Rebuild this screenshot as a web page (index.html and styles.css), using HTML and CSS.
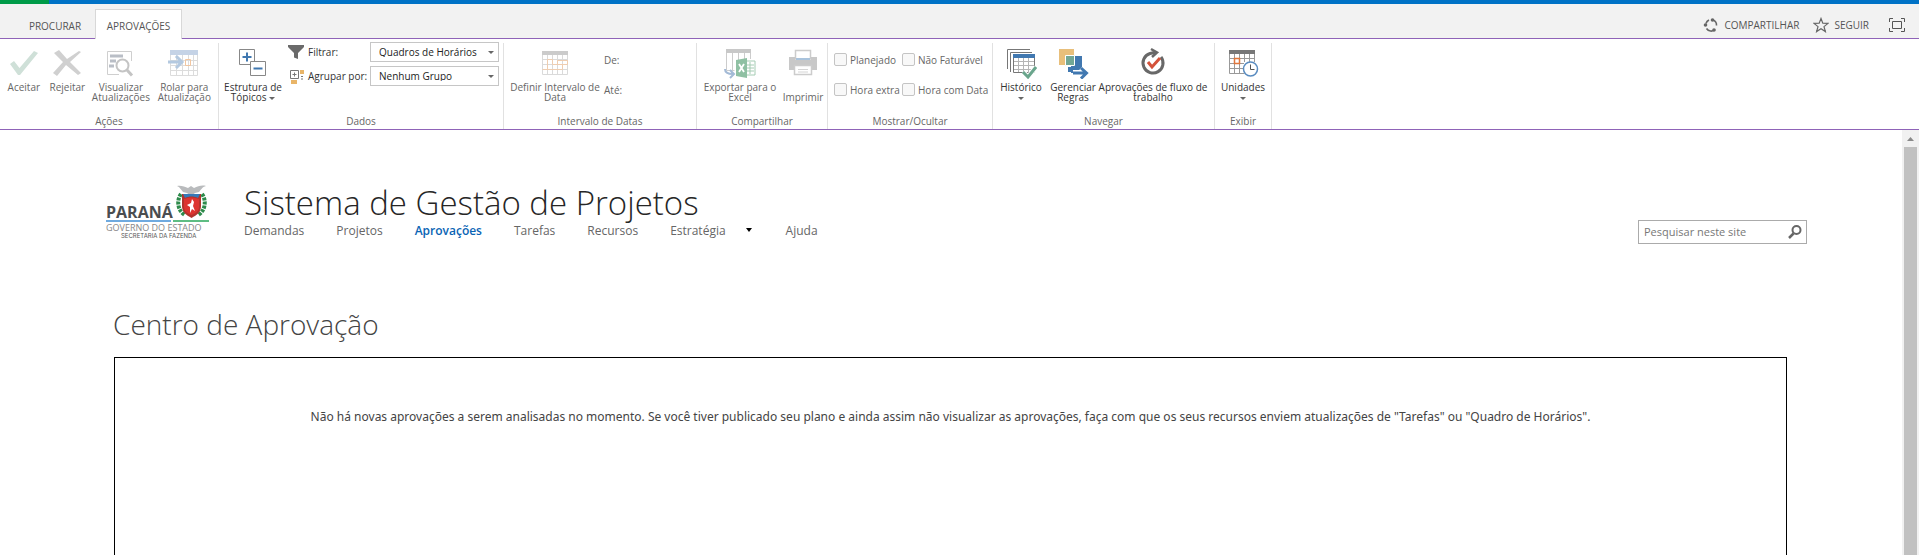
FILE: index.html
```html
<!DOCTYPE html>
<html lang="pt-BR">
<head>
<meta charset="utf-8">
<title>Centro de Aprovação</title>
<link rel="stylesheet" href="styles.css">
</head>
<body>
<div class="suite-bar"></div>
<header class="tab-row">
  <nav class="tabs">
    <button class="tab">PROCURAR</button>
    <button class="tab tab-active">APROVAÇÕES</button>
  </nav>
  <div class="page-actions">
    <button class="page-action">
      <svg width="16" height="16" viewBox="0 0 16 16" fill="none" stroke="#666" stroke-width="1.6"><path d="M3 6.500A5.500 5.500 0 0 1 6 3M10 3a5.500 5.500 0 0 1 3.500 5.500M12 12.500a5.500 5.500 0 0 1-8.500-1"/><g fill="#666" stroke="none"><circle cx="9.500" cy="3" r="1.800"/><circle cx="2.500" cy="8" r="1.800"/><circle cx="11" cy="13" r="1.800"/></g></svg>
      COMPARTILHAR</button>
    <button class="page-action">
      <svg width="16" height="16" viewBox="0 0 16 16" fill="none" stroke="#666" stroke-width="1.200"><path d="M8 1.500 9.800 6.200 15 6.400 11 9.600 12.400 14.600 8 11.800 3.600 14.600 5 9.600 1 6.400 6.200 6.200Z"/></svg>
      SEGUIR</button>
    <button class="page-action page-focus" aria-label="Foco no conteúdo">
      <svg width="16" height="14" viewBox="0 0 16 14" fill="none" stroke="#555"><path d="M.5 4V.5H4M12 .5h3.500V4M15.500 10v3.500H12M4 13.500H.5V10M3.500 3.500h9v7h-9z"/></svg>
    </button>
  </div>
</header>

<section class="ribbon" aria-label="Faixa de opções">
  <div class="group group-actions">
    <div class="group-body">
      <button class="tool tool-s disabled">
        <svg class="icon" viewBox="0 0 32 32"><path d="M2 17l4-3 5.500 7L26 4l4 2-18 22h-2z" fill="#cfe0d8"/></svg>
        <span>Aceitar</span></button>
      <button class="tool tool-s disabled">
        <svg class="icon" viewBox="0 0 32 32"><path d="M3 6l5-3 8 9L28 4l2 1-11 10 11 11-3 2-12-10L6 29l-4-3 10-11z" fill="#d0d0d0"/></svg>
        <span>Rejeitar</span></button>
      <button class="tool tool-m disabled">
        <svg class="icon" viewBox="0 0 32 32" fill="none" stroke="#cfcfcf"><path d="M14 27.500H2.500v-23h24V14"/><path d="M5 9h13M5 14h6M4 19h5" stroke="#b9bec6" stroke-width="3"/><circle cx="17.500" cy="18.500" r="6" stroke="#c4c4c4" stroke-width="2" fill="#fff"/><path d="M22 23l5 5.500" stroke="#c4c4c4" stroke-width="3"/></svg>
        <span>Visualizar<br>Atualizações</span></button>
      <button class="tool tool-m disabled">
        <svg class="icon" viewBox="0 0 32 32" fill="none"><path d="M2 3h28v5H2z" fill="#c5d3e6"/><path d="M2.500 8v20.500h27V8M8.500 8v20M14.500 8v20M20.500 8v20M25.500 8v20M2 13.500h27M2 18.500h27M2 23.500h27" stroke="#dcdcdc"/><path d="M0 15h12M8 9l6 6-6 6" stroke="#b4c9e0" stroke-width="3"/><path d="M17.500 12.500h5v6h-5z" stroke="#f2c6a0"/></svg>
        <span>Rolar para<br>Atualização</span></button>
    </div>
    <div class="group-name">Ações</div>
  </div>

  <div class="group group-data">
    <div class="group-body">
      <button class="tool tool-m">
        <svg class="icon" viewBox="0 0 32 32" fill="none" stroke="#888"><path d="M2.500 2.500h15v15h-15z"/><path d="M13.500 14.500h15v14h-15z" fill="#fff"/><path d="M5.500 10h9M10 5.500v9M16.500 21.500h9" stroke="#4178b0" stroke-width="2"/></svg>
        <span>Estrutura de<br>Tópicos <i class="caret"></i></span></button>
      <div class="filters">
        <svg width="16" height="15" viewBox="0 0 16 15"><path d="M0 0h16v2l-6 6v6l-4-1.500V8L0 2z" fill="#6a6a6a"/></svg>
        <label for="filter">Filtrar:</label>
        <div class="drop"><select id="filter"><option>Quadros de Horários</option></select><i class="caret"></i></div>
        <svg width="16" height="15" viewBox="0 0 16 15"><path d="M2.500 1.500h8v8h-8zM6.500 3.500v4M4.500 5.500h4" fill="none" stroke="#777"/><path d="M12 1h4v4h-4zM3 11h6v4H3z" fill="#e9b568"/><path d="M13 7h2v1h-2zM13 9.500h2v1h-2z" fill="#777"/></svg>
        <label for="grouping">Agrupar por:</label>
        <div class="drop"><select id="grouping"><option>Nenhum Grupo</option></select><i class="caret"></i></div>
      </div>
    </div>
    <div class="group-name">Dados</div>
  </div>

  <div class="group group-dates">
    <div class="group-body">
      <button class="tool tool-l disabled">
        <svg class="icon" viewBox="0 0 32 32" fill="none"><path d="M3 4h26v4H3z" fill="#cbcbcb"/><path d="M3.500 8v19.500h25V8M8.500 8v19M13.500 8v19M18.500 8v19M23.500 8v19M3 12.500h25M3 17.500h25M3 22.500h25" stroke="#dadada"/><path d="M8.500 12.500h5v5h10v5h-15zM18.500 17.500h10v-4h-10zM3.500 22.500h5" stroke="#efcdb0"/></svg>
        <span>Definir Intervalo de<br>Data</span></button>
      <div class="range disabled"><span>De:</span><span>Até:</span></div>
    </div>
    <div class="group-name">Intervalo de Datas</div>
  </div>

  <div class="group group-share">
    <div class="group-body">
      <button class="tool tool-xl disabled">
        <svg class="icon" viewBox="0 0 32 32" fill="none"><path d="M2 2h25v4H2z" fill="#c8c8c8"/><path d="M2.500 6v17.500h8M8.500 6v17M14.500 6v7M20.500 6v6M26.500 6v6" stroke="#ccc"/><path d="M21 14h10v14H21zM22 18h8M22 21h8M22 24h8M26 15v12" stroke="#a5ccb4" fill="#fff"/><path d="M12 13l11-2v20l-11-2z" fill="#8fc0a3"/><path d="M15 17l5 8M20 17l-5 8" stroke="#fff" stroke-width="1.800"/><path d="M1 22c0 4 3 5 8 5M6 23l4 4-4 4" stroke="#a3bad6" stroke-width="2"/></svg>
        <span>Exportar para o<br>Excel</span></button>
      <button class="tool tool-s disabled">
        <svg class="icon" viewBox="0 0 32 32"><path d="M8.500 3.500h15V12h-15z" fill="#fff" stroke="#ccc" stroke-width="1.500"/><path d="M2 10h6v3h16v-3h6v13h-5v-5H7v5H2z" fill="#c8c8c8"/><path d="M9 11h14v2H9z" fill="#a9c3dc"/><path d="M7.500 18.500h17v9h-17z" fill="#fff" stroke="#ccc" stroke-width="1.500"/><path d="M11 22.500h10M11 25h10" stroke="#d4d4d4"/></svg>
        <span><br>Imprimir</span></button>
    </div>
    <div class="group-name">Compartilhar</div>
  </div>

  <div class="group group-show">
    <div class="checks disabled">
      <label><input type="checkbox">Planejado</label>
      <label><input type="checkbox">Não Faturável</label>
      <label><input type="checkbox">Hora extra</label>
      <label><input type="checkbox">Hora com Data</label>
    </div>
    <div class="group-name">Mostrar/Ocultar</div>
  </div>

  <div class="group group-navigate">
    <div class="group-body">
      <button class="tool tool-n">
        <svg class="icon" viewBox="0 0 32 32" fill="none" stroke="#777"><path d="M2.500 22V2.500H25M5.500 25V5.500H27"/><path d="M8.500 9v16.500h21V9z" fill="#fff"/><path d="M13.500 10v15M18.500 10v15M23.500 10v15M9 14.500h20M9 18.500h20M9 22.500h20" stroke="#b5b5b5"/><path d="M8 7h22v4H8z" fill="#4178b0" stroke="none"/><path d="M18 25l5 5 8-10" stroke="#fff" stroke-width="5"/><path d="M18 25l5 5 8-10" stroke="#6aa58c" stroke-width="3"/></svg>
        <span>Histórico<br><i class="caret"></i></span></button>
      <button class="tool tool-n">
        <svg class="icon" viewBox="0 0 32 32"><path d="M2 2h15v16H2z" fill="#e8bf7b"/><path d="M14 9h11v17H14z" fill="#4178b0"/><path d="M8.500 8.500h9v10h-9z" fill="#72a795" stroke="#fff"/><path d="M11 20h5v5h-5z" fill="#4178b0"/><path d="M16 26h13M24 21l5.500 5-5.500 5.500" fill="none" stroke="#fff" stroke-width="6"/><path d="M16 26h13M24 21l5.500 5-5.500 5.500" fill="none" stroke="#4178b0" stroke-width="3"/></svg>
        <span>Gerenciar<br>Regras</span></button>
      <button class="tool tool-w">
        <svg class="icon" viewBox="0 0 32 32" fill="none" stroke="#686868"><path d="M24 10a10 10 0 1 1-11-3.500c3-1 5-1 7-1" stroke-width="3"/><path d="M14 2l6 3.500-5 4.500" stroke-width="2.500"/><path d="M11 15l4 5 8-9" stroke="#d4523a" stroke-width="3"/></svg>
        <span>Aprovações de fluxo de<br>trabalho</span></button>
    </div>
    <div class="group-name">Navegar</div>
  </div>

  <div class="group group-view">
    <div class="group-body">
      <button class="tool tool-n">
        <svg class="icon" viewBox="0 0 32 32" fill="none"><path d="M2 3h26v4H2z" fill="#777"/><path d="M2.500 7v19.500h15M27.500 7v8M7.500 7v19M12.500 7v19M17.500 7v8M22.500 7v8M2 11.500h25M2 16.500h15M2 21.500h15" stroke="#999"/><path d="M7.500 11.500h5v5h-5z" stroke="#e0763b" stroke-width="1.500"/><circle cx="23.500" cy="22" r="7" fill="#fff" stroke="#5a8cc0" stroke-width="1.500"/><path d="M23.500 17.500V22.500h4" stroke="#555"/></svg>
        <span>Unidades<br><i class="caret"></i></span></button>
    </div>
    <div class="group-name">Exibir</div>
  </div>
</section>

<div class="workspace">
  <main class="content">
    <div class="site-header">
      <a href="#" class="logo" aria-label="Paraná Governo do Estado, Secretaria da Fazenda">
        <svg width="108" height="56" viewBox="0 0 108 56">
          <path d="M72 1c4-1 8 1 11 2l3-2 3 2c4-2 8-3 12-2-4 1-5 4-7 6l-4 1-4 3-4-3-4-1c-2-2-3-5-6-6z" fill="#b9bbbd"/>
          <path d="M76 9c-5 7-3 17 4 21M97 9c5 7 3 17-4 21" fill="none" stroke="#2d8a4b" stroke-width="4" stroke-dasharray="3 1"/>
          <path d="M77 9h19v12c0 6-4 9-9.500 12C81 30 77 27 77 21z" fill="#b2332d"/>
          <path d="M78 9h17l-2 4c-4-2-9-2-13 0z" fill="#3679b8"/>
          <path d="M79 14c5-2 10-2 15 0v8c0 4-3 6-7.500 8C82 28 79 26 79 22z" fill="#dd3430"/>
          <path d="M87 14l2 3-1 4 2 5-3-2-2 4v-6l-3-2 4-2z" fill="#fff"/>
          <text x="1" y="33" class="logo-name">PARANÁ</text>
          <path d="M1 35h65v2H1z" fill="#6faadf"/><path d="M68 35h36v2H68z" fill="#5ebd83"/>
          <text x="1" y="46" class="logo-line">GOVERNO DO ESTADO</text>
          <text x="16" y="53" class="logo-small">SECRETARIA DA FAZENDA</text>
        </svg>
      </a>
      <div class="site-title">
        <h1>Sistema de Gestão de Projetos</h1>
        <nav class="site-nav">
          <a href="#">Demandas</a>
          <a href="#">Projetos</a>
          <a href="#" class="current">Aprovações</a>
          <a href="#">Tarefas</a>
          <a href="#">Recursos</a>
          <a href="#" class="has-menu">Estratégia</a>
          <a href="#">Ajuda</a>
        </nav>
      </div>
      <form class="search">
        <input type="text" placeholder="Pesquisar neste site" aria-label="Pesquisar neste site">
        <button type="button" aria-label="Pesquisar"><svg width="14" height="14" viewBox="0 0 14 14" fill="none" stroke="#666"><circle cx="8.500" cy="5" r="4" stroke-width="2"/><path d="M5.500 8.500L1 13" stroke-width="2.500"/></svg></button>
      </form>
    </div>
    <h2>Centro de Aprovação</h2>
    <div class="panel">
      <p>Não há novas aprovações a serem analisadas no momento. Se você tiver publicado seu plano e ainda assim não visualizar as aprovações, faça com que os seus recursos enviem atualizações de "Tarefas" ou "Quadro de Horários".</p>
    </div>
  </main>
  <div class="scroll-track" aria-hidden="true">
    <svg width="7" height="4" viewBox="0 0 7 4"><path d="M3.500 0L7 4H0z" fill="#8a8a8a"/></svg>
    <div class="scroll-thumb"></div>
  </div>
</div>
</body>
</html>
```
FILE: styles.css
```css
* { box-sizing: border-box; }
body {
  margin: 0;
  height: 100vh;
  display: flex;
  flex-direction: column;
  overflow: hidden;
  background: #fff;
  color: #444;
  font: 12px/16px "Open Sans", "Noto Sans", sans-serif;
}
button { border: 0; padding: 0; background: none; color: inherit; font: inherit; }
a { color: inherit; text-decoration: none; }
.suite-bar { flex: none; height: 4px; background: linear-gradient(to right, #009b48 49px, #0072c6 49px); }

.tab-row {
  flex: none;
  height: 35px;
  display: flex;
  justify-content: space-between;
  background: #f2f2f2;
  border-bottom: 1px solid #8f63b8;
  color: #555;
  font-size: 10px;
}
.tabs { display: flex; padding: 5px 0 0 15px; margin-bottom: -1px; }
.tab { min-width: 80px; padding: 2px 10px 0; border: 1px solid transparent; border-bottom: 0; }
.tab-active { min-width: 87px; background: #fff; border-color: #d8d8d8; }
.page-actions { display: flex; align-items: center; gap: 14px; padding: 8px 14px 0 0; }
.page-action { display: flex; align-items: center; gap: 5px; }
.page-focus { margin-left: 6px; }

.ribbon {
  flex: none;
  display: flex;
  height: 91px;
  padding-top: 4px;
  border-bottom: 1px solid #8f63b8;
  color: #333;
  font-size: 10px;
  line-height: 10px;
  white-space: nowrap;
}
.group { display: flex; flex-direction: column; justify-content: space-between; border-right: 1px solid #e1e1e1; padding: 4px 2px 2px; }
.group-body { display: flex; }
.group-name { text-align: center; line-height: 12px; color: #666; }
.group-actions { width: 219px; }
.group-data { width: 285px; }
.group-dates { width: 193px; }
.group-share { width: 131px; }
.group-show { width: 165px; }
.group-navigate { width: 222px; }
.group-view { width: 57px; }
.tool { display: flex; flex-direction: column; align-items: center; gap: 3px; }
.tool-s { width: 44px; }
.tool-n { width: 52px; }
.tool-m { width: 64px; }
.tool-xl { width: 82px; }
.tool-l { width: 98px; }
.tool-w { width: 108px; }
.icon { width: 32px; height: 32px; }
.disabled { color: #666; }
.caret { display: inline-block; border: 3px solid transparent; border-top-color: #666; border-bottom: 0; vertical-align: 1px; }

.filters { display: grid; grid-template-columns: 16px 58px 129px; column-gap: 4px; row-gap: 4px; align-content: start; align-items: center; margin: -5px 0 0 3px; }
.drop {
  display: flex;
  align-items: center;
  height: 20px;
  padding: 0 4px 0 8px;
  border: 1px solid #c6c6c6;
}
.drop select {
  appearance: none;
  flex: 1;
  min-width: 0;
  height: 18px;
  padding: 0;
  border: 0;
  background: none;
  color: #222;
  font: inherit;
}
.range { display: flex; flex-direction: column; gap: 20px; padding-top: 8px; }
.checks { display: grid; grid-template-columns: 68px auto; row-gap: 17px; padding: 6px 0 0 4px; }
.checks label { display: flex; align-items: center; gap: 3px; }
.checks input { appearance: none; width: 13px; height: 13px; margin: 0; border: 1px solid #c4c4c4; border-radius: 2px; background: #f8f8f8; }

.workspace { flex: 1; min-height: 0; display: flex; }
.content { flex: 1; min-width: 0; display: flex; flex-direction: column; }
.site-header { display: flex; padding: 52px 95px 0 105px; }
.logo { margin-top: 3px; }
.logo svg { display: block; }
.logo-name { font: 700 16px "Open Sans", sans-serif; fill: #4a4d50; }
.logo-line { font: 9px "Open Sans", sans-serif; fill: #888; }
.logo-small { font: 6px Inter, sans-serif; fill: #555; }
.site-title { flex: 1; padding-left: 31px; }
h1 { margin: 0; font-size: 33px; line-height: 41px; font-weight: 300; color: #262626; }
.site-nav { display: flex; gap: 32px; color: #666; }
.current { color: #0a64b4; font-weight: 600; }
.has-menu::after { content: ""; display: inline-block; margin: 0 2px 3px 20px; border: 3px solid transparent; border-top: 4px solid #000; border-bottom: 0; }
.search { display: flex; align-items: center; align-self: flex-start; width: 169px; height: 24px; margin-top: 38px; border: 1px solid #ababab; padding: 0 4px 0 5px; }
.search input { flex: 1; min-width: 0; border: 0; padding: 0; outline: 0; background: none; font: inherit; font-size: 11px; }
.search input::placeholder { color: #777; }
.search button { display: flex; }
h2 { margin: 62px 0 15px 113px; font-size: 28px; line-height: 36px; font-weight: 300; color: #444; }
.panel { flex: 1; margin: 0 115px 0 114px; border: 1px solid #000; border-bottom: 0; text-align: center; }
.panel p { margin: 51px 0 0; font-family: "Noto Sans", "Open Sans", sans-serif; }

.scroll-track { width: 17px; display: flex; flex-direction: column; align-items: center; gap: 6px; padding-top: 7px; background: #f1f1f1; }
.scroll-thumb { flex: 1; width: 13px; background: #c1c1c1; }
```
